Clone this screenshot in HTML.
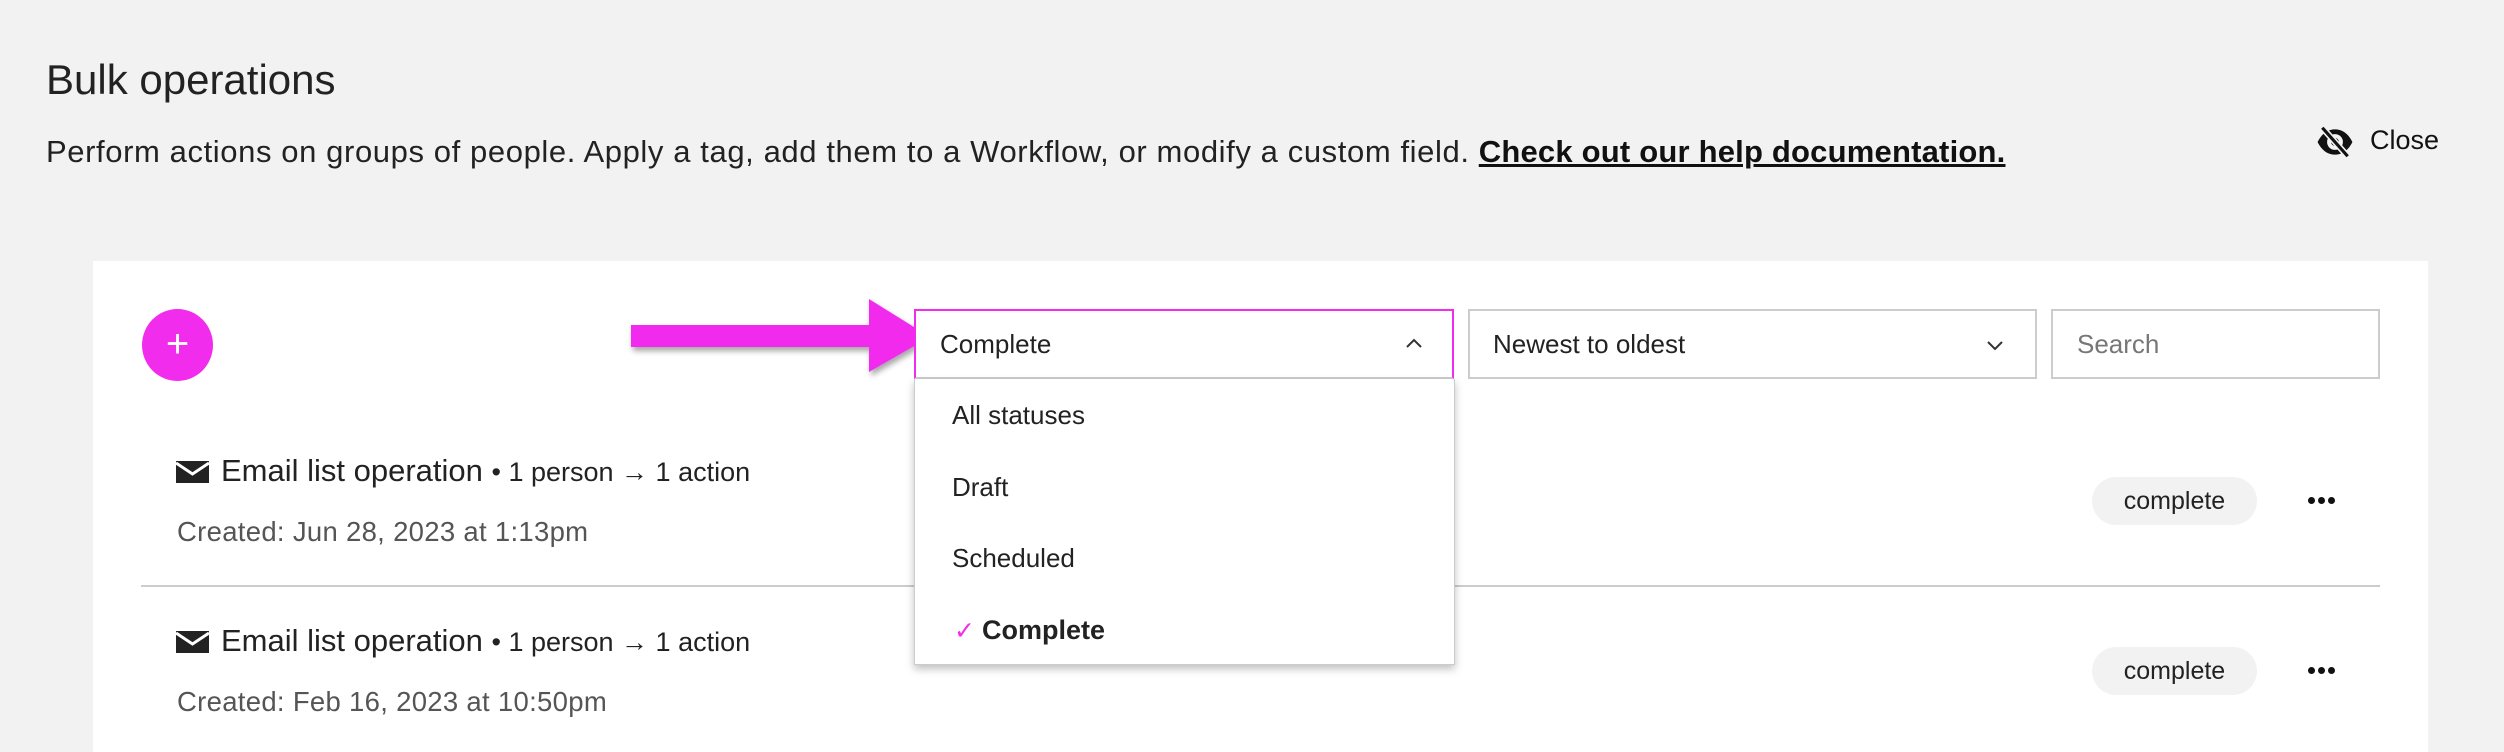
<!DOCTYPE html>
<html><head><style>
*{margin:0;padding:0;box-sizing:border-box}
body{width:2504px;height:752px;background:#f2f2f2;font-family:"Liberation Sans",sans-serif;color:#222;position:relative;overflow:hidden}
.a{position:absolute;white-space:nowrap}
.d{position:absolute;width:7px;height:7px;border-radius:50%;background:#111}
</style></head><body>
<div class="a" style="left:46px;top:56px;font-size:42px;color:#222">Bulk operations</div>
<div class="a" style="left:46px;top:134px;font-size:31px;letter-spacing:0.6px;color:#222">Perform actions on groups of people. Apply a tag, add them to a Workflow, or modify a custom field. <span style="font-weight:bold;text-decoration:underline;color:#111;letter-spacing:0.2px">Check out our help documentation.</span></div>
<svg class="a" style="left:2316px;top:126px" width="38" height="32" viewBox="0 0 24 20"><path d="M1 10C4 4 8 2 12 2s8 2 11 8c-3 6-7 8-11 8S4 16 1 10z" fill="#111"/><circle cx="12" cy="10" r="5" fill="#f2f2f2"/><circle cx="12" cy="10" r="2.5" fill="#111"/><path d="M4 1L20 19" stroke="#f2f2f2" stroke-width="4"/><path d="M4 1L20 19" stroke="#111" stroke-width="2"/></svg>
<div class="a" style="left:2370px;top:125px;font-size:27px;color:#111">Close</div>

<div class="a" style="left:93px;top:261px;width:2335px;height:491px;background:#fff"></div>
<div class="a" style="left:142px;top:309px;width:71px;height:72px;border-radius:50%;background:#f22ced;color:#fff;font-size:40px;text-align:center;line-height:70px">+</div>

<svg class="a" style="left:625px;top:292px;overflow:visible" width="320" height="90"><defs><filter id="s" x="-10%" y="-20%" width="130%" height="150%"><feDropShadow dx="2" dy="4" stdDeviation="3" flood-opacity="0.35"/></filter></defs><path d="M6 33H244V7L305 45L244 80V55H6z" fill="#f22ced" filter="url(#s)"/></svg>

<div class="a" style="left:914px;top:309px;width:540px;height:70px;border:2px solid #f22ced;border-bottom-color:#ccc;background:#fff"></div>
<div class="a" style="left:940px;top:329px;font-size:26px">Complete</div>
<svg class="a" style="left:1405px;top:337px" width="18" height="12"><path d="M2 10L9 3L16 10" stroke="#333" stroke-width="2" fill="none"/></svg>

<div class="a" style="left:1468px;top:309px;width:569px;height:70px;border:2px solid #ccc;background:#fff"></div>
<div class="a" style="left:1493px;top:329px;font-size:26px">Newest to oldest</div>
<svg class="a" style="left:1986px;top:340px" width="18" height="12"><path d="M2 2L9 9L16 2" stroke="#333" stroke-width="2" fill="none"/></svg>

<div class="a" style="left:2051px;top:309px;width:329px;height:70px;border:2px solid #ccc;background:#fff"></div>
<div class="a" style="left:2077px;top:329px;font-size:26px;color:#777">Search</div>

<div class="a" style="left:176px;top:461px;width:33px;height:22px;background:#222"></div>
<svg class="a" style="left:176px;top:461px" width="33" height="22"><path d="M0 2L16.5 13L33 2" stroke="#fff" stroke-width="3" fill="none"/></svg>
<div class="a" style="left:221px;top:453px;font-size:31px;font-weight:500;color:#222">Email list operation <span style="font-size:27px">• 1 person → 1 action</span></div>
<div class="a" style="left:177px;top:516px;font-size:27.5px;letter-spacing:0.3px;color:#555">Created: Jun 28, 2023 at 1:13pm</div>
<div class="a" style="left:2092px;top:477px;width:165px;height:48px;border-radius:24px;background:#f2f2f2;text-align:center;line-height:48px;font-size:25px;color:#222">complete</div>
<div class="d" style="left:2308px;top:497px"></div><div class="d" style="left:2318px;top:497px"></div><div class="d" style="left:2328px;top:497px"></div>

<div class="a" style="left:141px;top:585px;width:2239px;height:2px;background:#ccc"></div>

<div class="a" style="left:176px;top:631px;width:33px;height:22px;background:#222"></div>
<svg class="a" style="left:176px;top:631px" width="33" height="22"><path d="M0 2L16.5 13L33 2" stroke="#fff" stroke-width="3" fill="none"/></svg>
<div class="a" style="left:221px;top:623px;font-size:31px;font-weight:500;color:#222">Email list operation <span style="font-size:27px">• 1 person → 1 action</span></div>
<div class="a" style="left:177px;top:686px;font-size:27.5px;letter-spacing:0.3px;color:#555">Created: Feb 16, 2023 at 10:50pm</div>
<div class="a" style="left:2092px;top:647px;width:165px;height:48px;border-radius:24px;background:#f2f2f2;text-align:center;line-height:48px;font-size:25px;color:#222">complete</div>
<div class="d" style="left:2308px;top:667px"></div><div class="d" style="left:2318px;top:667px"></div><div class="d" style="left:2328px;top:667px"></div>

<div class="a" style="left:914px;top:379px;width:541px;height:286px;background:#fff;border:1px solid #ccc;border-top:none;box-shadow:0 4px 8px rgba(0,0,0,0.25)"></div>
<div class="a" style="left:952px;top:400px;font-size:26px">All statuses</div>
<div class="a" style="left:952px;top:472px;font-size:26px">Draft</div>
<div class="a" style="left:952px;top:543px;font-size:26px">Scheduled</div>
<div class="a" style="left:954px;top:616px;font-size:25px;color:#f22ced">✓</div>
<div class="a" style="left:982px;top:615px;font-size:27px;font-weight:bold">Complete</div>
</body></html>
